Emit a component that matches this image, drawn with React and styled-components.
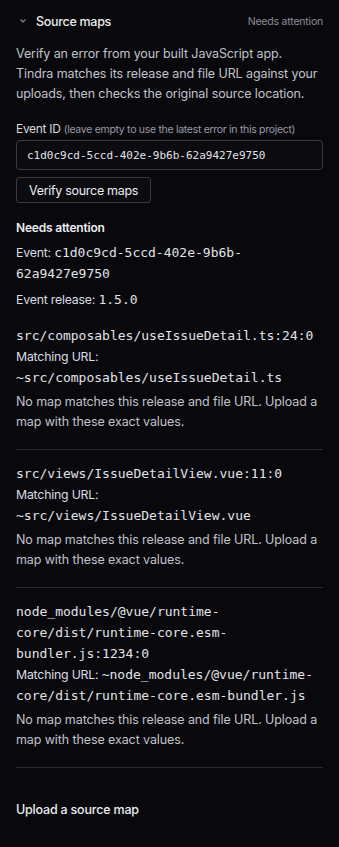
import React from 'react';
import styled, { createGlobalStyle } from 'styled-components';

const GlobalStyle = createGlobalStyle`
  html, body {
    margin: 0;
    padding: 0;
    background: #09090d;
  }
  body {
    font-family: Inter, "Noto Sans", sans-serif;
    letter-spacing: -0.2px;
    color: #e4e4e9;
  }
`;

const Panel = styled.section`
  padding: 10px 16px 40px;
  background: #09090d;
  min-height: 847px;
  box-sizing: border-box;
`;

const Header = styled.div`
  display: flex;
  align-items: center;
  height: 22px;
`;

const Chevron = styled.svg`
  width: 10px;
  height: 10px;
  margin: 0 8px 0 2px;
  color: #8a8a96;
`;

const Title = styled.h2`
  flex: 1;
  margin: 0;
  font-size: 12.5px;
  font-weight: 500;
  letter-spacing: -0.3px;
  color: #ececf1;
`;

const Status = styled.span`
  font-size: 10.5px;
  letter-spacing: -0.2px;
  color: #8d8d99;
`;

const Intro = styled.p`
  max-width: 303px;
  margin: 12px 0 0;
  font-size: 12.5px;
  letter-spacing: -0.1px;
  line-height: 20px;
  color: #c2c2cb;
`;

const Label = styled.label`
  display: block;
  margin-top: 17px;
  font-size: 12px;
  line-height: 16px;
  letter-spacing: -0.3px;
  color: #d8d8df;
`;

const Hint = styled.span`
  font-size: 10.5px;
  letter-spacing: -0.3px;
  color: #9a9aa6;
`;

const Input = styled.input`
  display: block;
  width: 100%;
  box-sizing: border-box;
  height: 30px;
  margin-top: 2px;
  padding: 0 10px;
  background: #0b0b10;
  border: 1px solid #393944;
  border-radius: 4px;
  color: #e2e2e8;
  font-family: "DejaVu Sans Mono", monospace;
  font-size: 11px;
  letter-spacing: 0;
  outline: none;
`;

const Button = styled.button`
  display: block;
  margin-top: 7px;
  height: 26px;
  padding: 0 12px;
  background: #0b0b10;
  border: 1px solid #393944;
  border-radius: 3px;
  color: #ececf1;
  font-family: Inter, sans-serif;
  font-size: 12.5px;
  letter-spacing: -0.3px;
`;

const Result = styled.div`
  margin-top: 16px;
`;

const ResultTitle = styled.h3`
  margin: 0;
  font-size: 12px;
  font-weight: 600;
  line-height: 18px;
  color: #ececf1;
`;

const Line = styled.p`
  margin: 5px 0 0;
  font-size: 12.3px;
  line-height: 21px;
  color: #dcdce2;
`;

const Mono = styled.span`
  font-family: "DejaVu Sans Mono", monospace;
  font-size: 13px;
  letter-spacing: 0;
  color: #e2e2e8;
  word-break: break-word;
`;

const Frames = styled.ul`
  list-style: none;
  margin: 0;
  padding: 0;
`;

const Frame = styled.li`
  padding: 13px 0 17px;
  border-bottom: 1px solid #2a2a32;
  &:first-child {
    padding-top: 15px;
  }
`;

const FramePath = styled.div`
  font-family: "DejaVu Sans Mono", monospace;
  font-size: 13px;
  letter-spacing: 0;
  line-height: 21px;
  color: #e2e2e8;
  word-break: break-word;
`;

const FrameUrl = styled.div`
  font-size: 12.3px;
  line-height: 21px;
  color: #dcdce2;
`;

const FrameNote = styled.p`
  margin: 4px 0 0;
  font-size: 12.5px;
  letter-spacing: -0.1px;
  line-height: 20px;
  color: #c2c2cb;
`;

const UploadTitle = styled.h3`
  margin: 34px 0 0;
  font-size: 12.5px;
  line-height: 16px;
  font-weight: 500;
  color: #ececf1;
`;

const frames = [
  {
    path: 'src/composables/useIssueDetail.ts:24:0',
    url: '~src/composables/useIssueDetail.ts',
  },
  {
    path: 'src/views/IssueDetailView.vue:11:0',
    url: '~src/views/IssueDetailView.vue',
  },
  {
    path: 'node_modules/@vue/runtime-core/dist/runtime-core.esm-bundler.js:1234:0',
    url: '~node_modules/@vue/runtime-core/dist/runtime-core.esm-bundler.js',
  },
];

const App = () => {
  return (
    <Panel>
      <GlobalStyle />
      <Header>
        <Chevron viewBox="0 0 10 10" fill="none">
          <path d="M2.5 3.5 5 6 7.5 3.5" stroke="currentColor" strokeWidth="1.1" />
        </Chevron>
        <Title>Source maps</Title>
        <Status>Needs attention</Status>
      </Header>

      <Intro>
        Verify an error from your built JavaScript app. Tindra matches its
        release and file URL against your uploads, then checks the original
        source location.
      </Intro>

      <Label>
        Event ID <Hint>(leave empty to use the latest error in this project)</Hint>
        <Input defaultValue="c1d0c9cd-5ccd-402e-9b6b-62a9427e9750" />
      </Label>
      <Button>Verify source maps</Button>

      <Result>
        <ResultTitle>Needs attention</ResultTitle>
        <Line>
          Event: <Mono>c1d0c9cd-5ccd-402e-9b6b-62a9427e9750</Mono>
        </Line>
        <Line>
          Event release: <Mono>1.5.0</Mono>
        </Line>

        <Frames>
          {frames.map(({ path, url }) => (
            <Frame key={path}>
              <FramePath>{path}</FramePath>
              <FrameUrl>
                Matching URL: <Mono>{url}</Mono>
              </FrameUrl>
              <FrameNote>
                No map matches this release and file URL. Upload a map with
                these exact values.
              </FrameNote>
            </Frame>
          ))}
        </Frames>
      </Result>

      <UploadTitle>Upload a source map</UploadTitle>
    </Panel>
  );
};

export default App;
